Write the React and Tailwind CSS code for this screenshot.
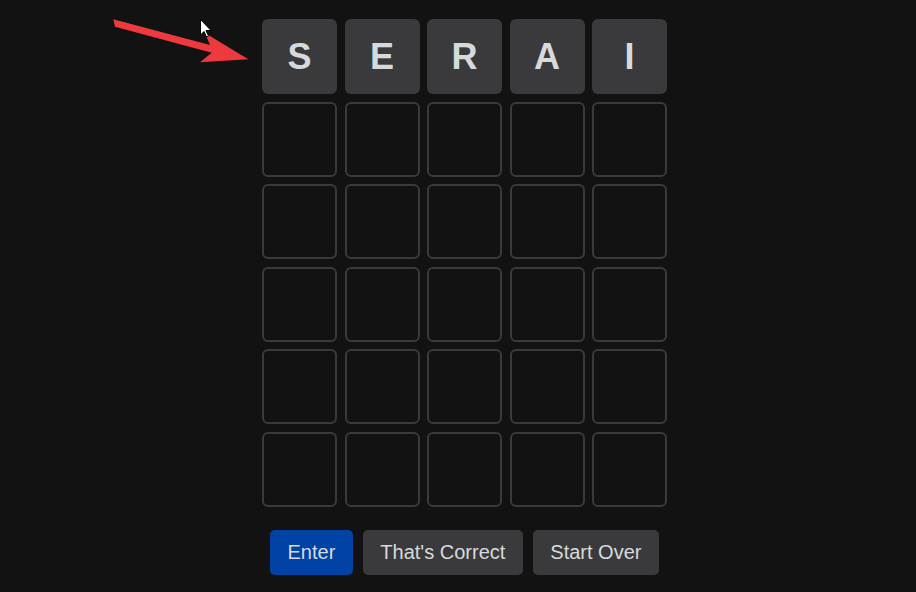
const rows = [
  ['S', 'E', 'R', 'A', 'I'],
  ['', '', '', '', ''],
  ['', '', '', '', ''],
  ['', '', '', '', ''],
  ['', '', '', '', ''],
  ['', '', '', '', ''],
];

function Tile({ letter }) {
  if (letter) {
    return (
      <div className="w-[75px] h-[75px] rounded-[6px] bg-[#3a3a3c] flex items-center justify-center text-[36px] font-bold text-[#d7dadc]">
        {letter}
      </div>
    );
  }
  return <div className="w-[75px] h-[75px] rounded-[6px] border-2 border-[#3a3a3c]" />;
}

export default function App() {
  return (
    <div
      className="relative min-h-screen bg-[#121212] overflow-hidden"
      style={{ fontFamily: '"Liberation Sans", Arial, sans-serif' }}
    >
      <div className="flex flex-col items-center pt-[19px] pl-[13px]">
        {/* Board */}
        <div className="grid grid-cols-5 gap-[7.5px]">
          {rows.map((row, r) =>
            row.map((l, c) => <Tile key={`${r}-${c}`} letter={l} />)
          )}
        </div>

        {/* Controls */}
        <div className="flex gap-[10px] mt-[23px]">
          <button className="px-[17.5px] py-[11px] text-[20px] leading-[23px] rounded-[5px] bg-[#0043a5] text-[#d7dadc]">
            Enter
          </button>
          <button className="px-[17.5px] py-[11px] text-[20px] leading-[23px] rounded-[5px] bg-[#3a3a3c] text-[#d7dadc]">
            That's Correct
          </button>
          <button className="px-[17.5px] py-[11px] text-[20px] leading-[23px] rounded-[5px] bg-[#3a3a3c] text-[#d7dadc]">
            Start Over
          </button>
        </div>
      </div>

      {/* Annotation arrow + cursor */}
      <svg className="absolute left-0 top-0 pointer-events-none" width="916" height="592">
        <polygon
          points="113.3,19.3 210,45 205,33 248.3,59.3 200,62.3 211.7,52.7 115,26.7"
          fill="#ee3a3e"
        />
        <path
          d="M200.5 19.5 L200.5 35 L204 31.5 L206.5 37 L208.5 36 L206 30.5 L211 30.5 Z"
          fill="#ffffff"
          stroke="#000000"
          strokeWidth="1"
          strokeLinejoin="round"
        />
      </svg>
    </div>
  );
}
